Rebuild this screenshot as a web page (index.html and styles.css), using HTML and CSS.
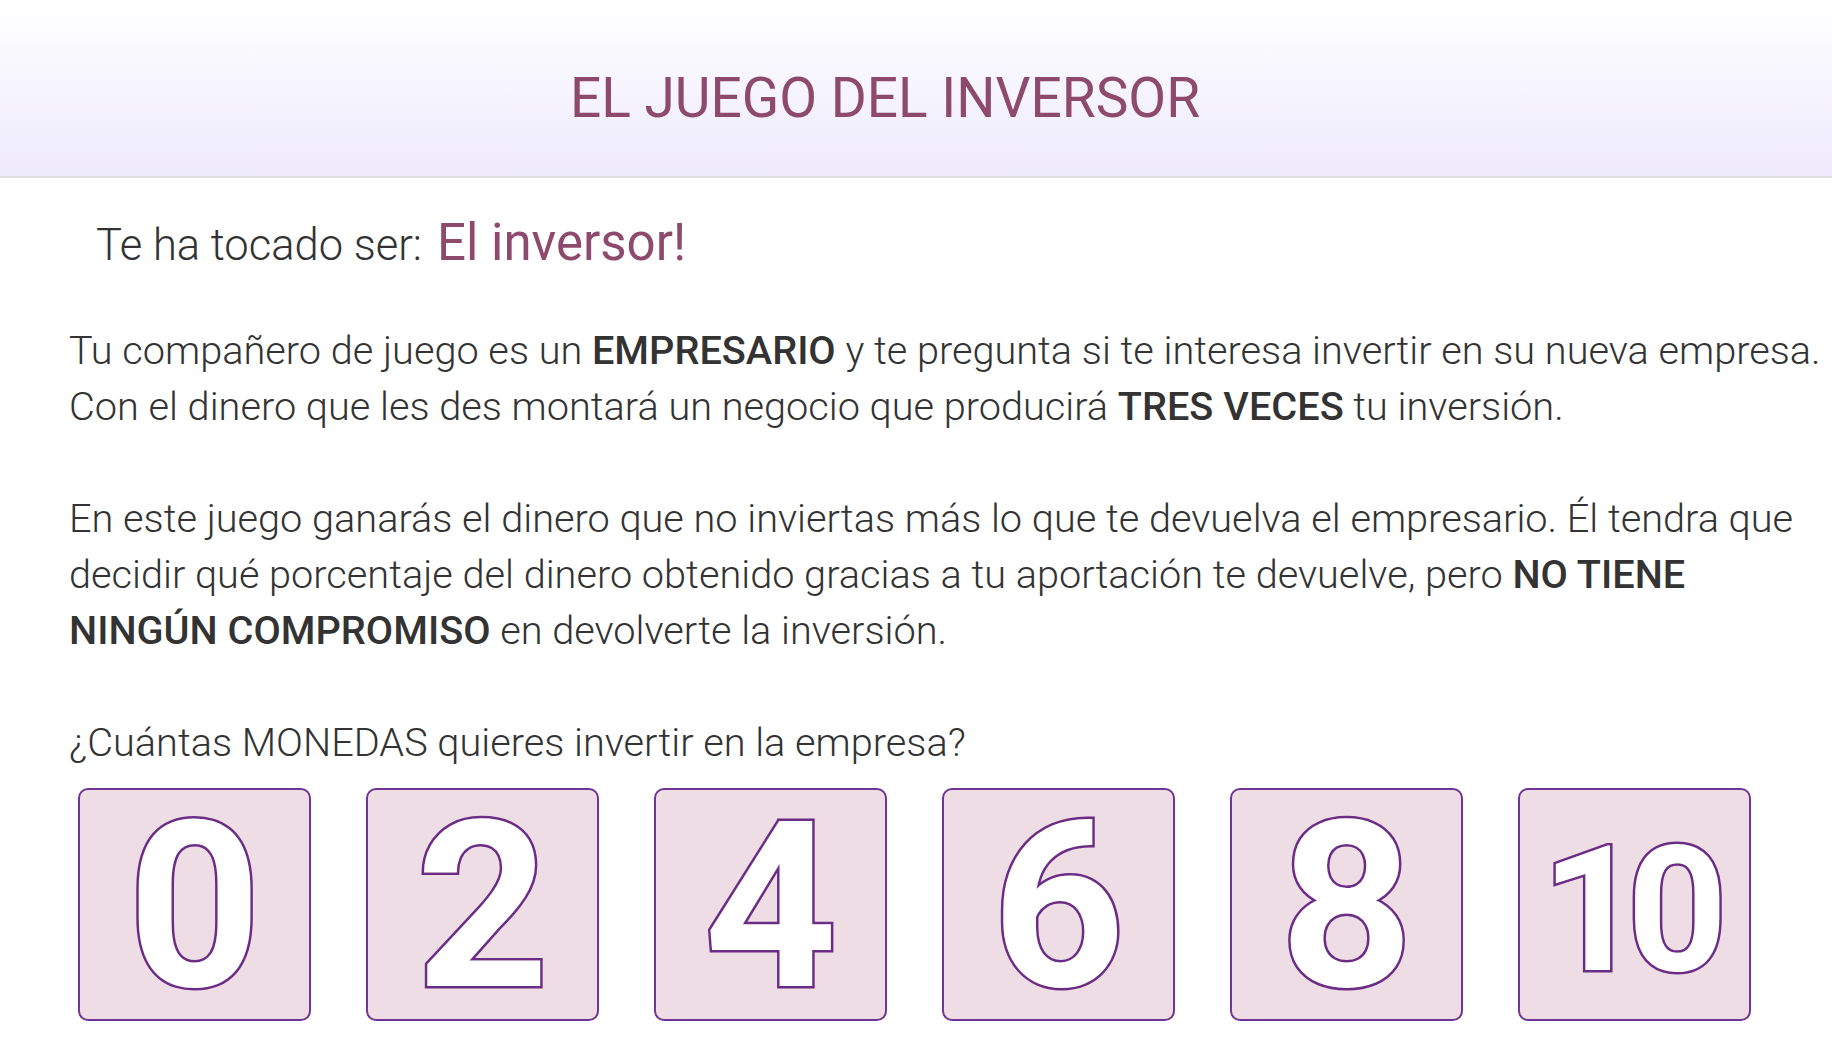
FILE: index.html
```html
<!DOCTYPE html>
<html lang="es">
<head>
<meta charset="utf-8">
<title>El juego del inversor</title>
<link rel="stylesheet" href="styles.css">
</head>
<body>
<header class="topbar">
  <h1 class="title">EL JUEGO DEL INVERSOR</h1>
</header>
<main class="content">
  <div class="role">
    <span class="role-label">Te ha tocado ser:</span>
    <span class="role-name">El inversor!</span>
  </div>
  <p class="text">Tu compañero de juego es un <strong>EMPRESARIO</strong> y te pregunta si te interesa invertir en su nueva empresa. Con el dinero que les des montará un negocio que producirá <strong>TRES VECES</strong> tu inversión.<br><br>En este juego ganarás el dinero que no inviertas más lo que te devuelva el empresario. Él tendra que decidir qué porcentaje del dinero obtenido gracias a tu aportación te devuelve, pero <strong>NO TIENE NINGÚN COMPROMISO</strong> en devolverte la inversión.<br><br>¿Cuántas MONEDAS quieres invertir en la empresa?</p>
  <div class="choices">
    <button class="coin">0</button>
    <button class="coin">2</button>
    <button class="coin">4</button>
    <button class="coin">6</button>
    <button class="coin">8</button>
    <button class="coin coin-small">10</button>
  </div>
</main>
</body>
</html>
```

FILE: styles.css
```css
html, body {
  margin: 0;
  padding: 0;
  background: #ffffff;
}

body {
  font-family: Roboto, "Liberation Sans", sans-serif;
  color: #333333;
}

.topbar {
  box-sizing: border-box;
  height: 178px;
  border-bottom: 2px solid #dddddd;
  background: linear-gradient(to bottom, #ffffff 0%, #eeeafd 100%);
  padding: 70px 62px 0 0;
}

.title {
  margin: 0;
  font-size: 55px;
  line-height: 56px;
  font-weight: 400;
  color: #8d4a6d;
  text-align: center;
}

.content {
  padding: 0 0 0 69px;
}

.role {
  display: flex;
  align-items: baseline;
  gap: 15px;
  margin: 43px 0 0 27px;
  height: 60px;
}

.role-label {
  font-size: 43.5px;
  font-weight: 300;
  line-height: 44px;
  color: #333333;
}

.role-name {
  font-size: 51px;
  font-weight: 400;
  line-height: 44px;
  color: #8d4a6d;
}

.text {
  margin: 42px 0 0 0;
  font-size: 39.7px;
  font-weight: 300;
  line-height: 56px;
  color: #333333;
}

.text strong {
  font-weight: 500;
}

.choices {
  display: flex;
  gap: 55px;
  margin: 17px 0 0 9px;
}

.coin {
  width: 233px;
  height: 233px;
  box-sizing: border-box;
  border: 2px solid #6f3596;
  border-radius: 10px;
  background: #efdde5;
  padding: 4px 0 0 0;
  margin: 0;
  display: flex;
  align-items: center;
  justify-content: center;
  font-family: Roboto, "Liberation Sans", sans-serif;
  font-weight: 700;
  font-size: 232px;
  line-height: 1;
  color: #ffffff;
  -webkit-text-stroke: 5px #6b2c86;
  paint-order: stroke fill;
}

.coin-small {
  font-size: 175px;
  letter-spacing: -15px;
  padding: 12px 15px 0 0;
}
```
